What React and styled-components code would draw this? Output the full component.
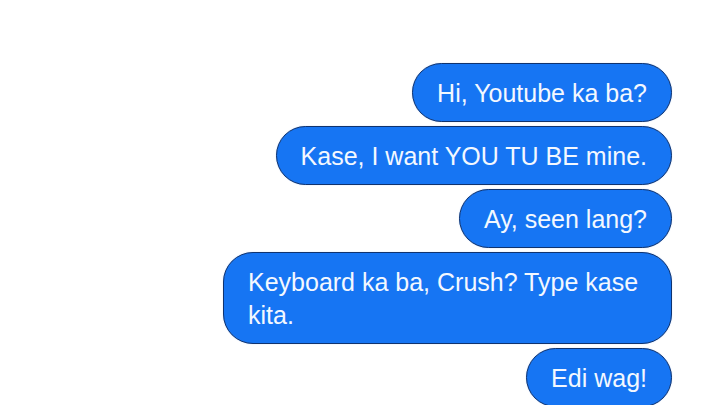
import { createGlobalStyle, styled } from "styled-components";

const GlobalStyle = createGlobalStyle`
  html, body {
    margin: 0;
    padding: 0;
    background: #ffffff;
    overflow: hidden;
  }
`;

const Thread = styled.div`
  display: flex;
  flex-direction: column;
  align-items: flex-end;
  gap: 4px;
  width: 720px;
  height: 405px;
  box-sizing: border-box;
  padding: 63px 48px 0 0;
  font-family: "Liberation Sans", Arial, sans-serif;
`;

const Bubble = styled.div`
  box-sizing: border-box;
  width: ${(p) => (p.$wide ? "449px" : "auto")};
  padding: 12.5px 24px 11.5px 24px;
  border: 1.5px solid #10336e;
  border-radius: 30px;
  background-color: #1675f3;
  color: #f3f8ff;
  font-size: 25px;
  line-height: 33px;
  white-space: ${(p) => (p.$wide ? "normal" : "nowrap")};
  box-shadow: 0 0 1px rgba(80, 140, 230, 0.6);
`;

const messages = [
  { text: "Hi, Youtube ka ba?" },
  { text: "Kase, I want YOU TU BE mine." },
  { text: "Ay, seen lang?" },
  { text: "Keyboard ka ba, Crush? Type kase kita.", wide: true },
  { text: "Edi wag!" },
];

export default function App() {
  return (
    <>
      <GlobalStyle />
      <Thread>
        {messages.map((m, i) => (
          <Bubble key={i} $wide={m.wide}>
            {m.text}
          </Bubble>
        ))}
      </Thread>
    </>
  );
}
